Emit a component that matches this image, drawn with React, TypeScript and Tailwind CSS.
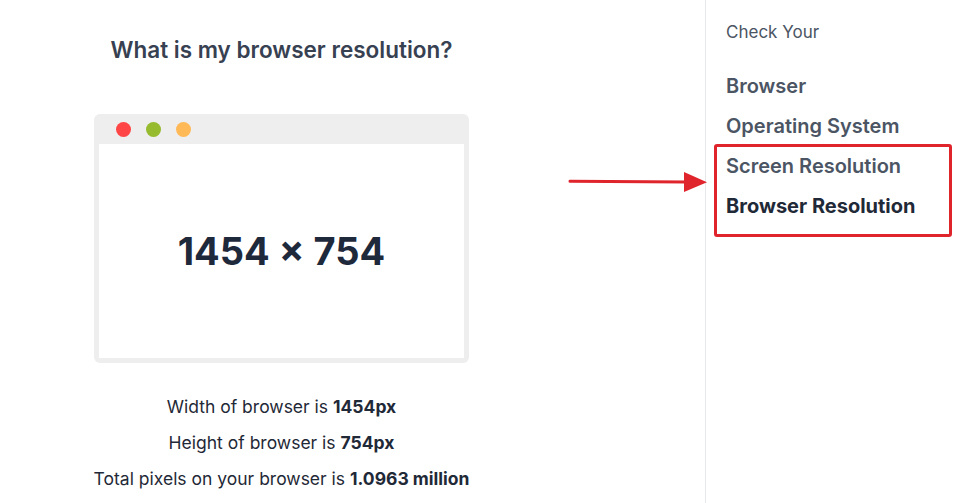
const links = ["Browser", "Operating System", "Screen Resolution"];

export default function App() {
  return (
    <div className="flex h-[503px] w-[978px] overflow-hidden bg-white font-['Inter',sans-serif]">
      <main className="relative w-[705px] shrink-0">
        <div className="flex w-[563px] flex-col items-center pt-[36px]">
          <h1 className="text-[22.5px] font-semibold leading-[28px] text-[#374151]">
            What is my browser resolution?
          </h1>
          <div className="mt-[50px] flex h-[249px] w-[375px] flex-col rounded-[6px] bg-[#eeeeee] px-[5px] pb-[5px]">
            <div className="flex h-[30px] shrink-0 items-center gap-[15px] pl-[17px]">
              <span className="h-[15px] w-[15px] rounded-full bg-[#ff4545]" />
              <span className="h-[15px] w-[15px] rounded-full bg-[#97bb2f]" />
              <span className="h-[15px] w-[15px] rounded-full bg-[#ffb957]" />
            </div>
            <div className="flex flex-1 items-center justify-center bg-white">
              <span className="text-[38px] font-bold text-[#1e293b]">1454 × 754</span>
            </div>
          </div>
          <div className="mt-[32px] flex flex-col items-center gap-[12px] text-[17.5px] leading-[24px] text-[#1f2937]">
            <p>
              Width of browser is <b className="font-bold">1454px</b>
            </p>
            <p>
              Height of browser is <b className="font-bold">754px</b>
            </p>
            <p>
              Total pixels on your browser is <b className="font-bold">1.0963 million</b>
            </p>
          </div>
        </div>
        <svg className="absolute left-[568px] top-[170px]" width="140" height="24" viewBox="0 0 140 24">
          <path d="M2 11.2 L118 12" stroke="#e0242c" strokeWidth="3" strokeLinecap="round" />
          <path d="M116 2 L139 12.2 L116 22 Z" fill="#e0242c" />
        </svg>
      </main>
      <aside className="flex-1 border-l border-[#e5e7eb] pt-[20px]">
        <p className="pl-[20px] text-[17px] leading-[24px] text-[#4b5563]">Check Your</p>
        <nav className="mt-[30px] flex flex-col">
          <div className="flex flex-col gap-[16px] pl-[20px]">
            {links.slice(0, 2).map((l) => (
              <a key={l} className="text-[20px] font-semibold leading-[24px] text-[#4b5563]">
                {l}
              </a>
            ))}
          </div>
          <div className="ml-[8px] mt-[6px] flex w-[238px] flex-col gap-[16px] rounded-[3px] border-[3px] border-[#e0242c] pb-[16px] pl-[9px] pt-[7px]">
            <a className="text-[20px] font-semibold leading-[24px] text-[#4b5563]">Screen Resolution</a>
            <a className="text-[20px] font-bold leading-[24px] text-[#1f2937]">Browser Resolution</a>
          </div>
        </nav>
      </aside>
    </div>
  );
}
